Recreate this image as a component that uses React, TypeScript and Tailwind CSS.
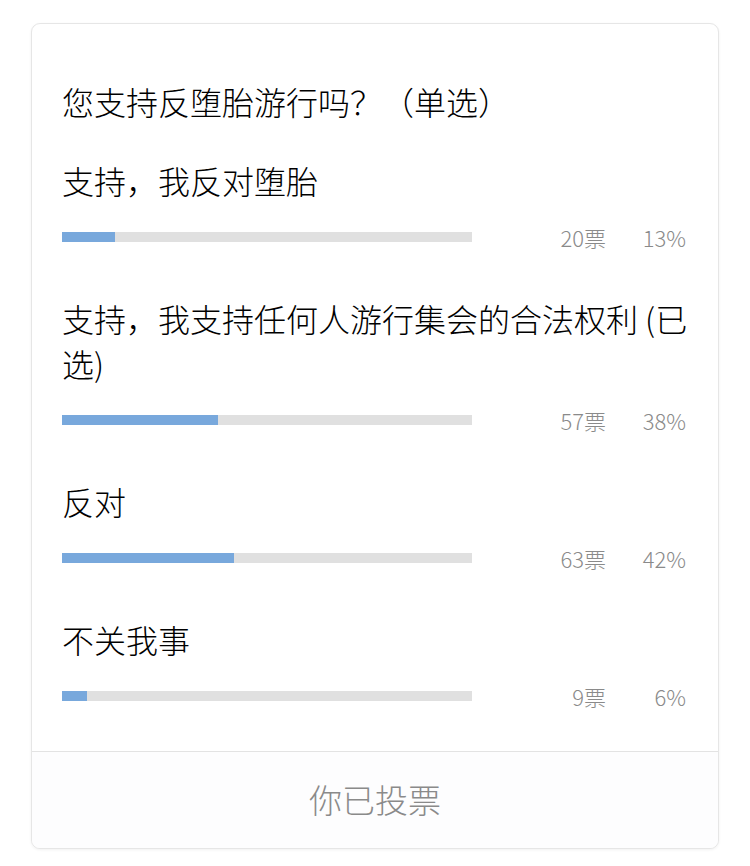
const font = { fontFamily: '"Noto Sans CJK SC", "Noto Sans", sans-serif' };

const options = [
  { label: '支持，我反对堕胎', votes: 20, pct: 13 },
  { label: '支持，我支持任何人游行集会的合法权利 (已选)', votes: 57, pct: 38 },
  { label: '反对', votes: 63, pct: 42 },
  { label: '不关我事', votes: 9, pct: 6 },
];

export default function App() {
  return (
    <div className="min-h-[866px] bg-white pt-[23px]" style={font}>
      <div className="mx-[31px] overflow-hidden rounded-[9px] border border-[#e6e6e6] bg-white shadow-[0_1px_3px_rgba(0,0,0,0.06)]">
        <div className="px-[30px] pt-[55px] pb-[40px]">
          <div className="text-[32px] font-light leading-[45px] text-black">您支持反堕胎游行吗？（单选）</div>
          <div className="mt-[34px] flex flex-col gap-[44px]">
            {options.map((o) => (
              <div key={o.label}>
                <div className="text-[32px] font-light leading-[45px] text-black">{o.label}</div>
                <div className="mt-[19px] flex h-[30px] items-center">
                  <div className="h-[10px] w-[410px] bg-[#e0e0e0]">
                    <div className="h-full bg-[#78a8dc]" style={{ width: `${o.pct}%` }} />
                  </div>
                  <div className="flex-1 text-right text-[22px] font-light leading-[30px] text-[#8a8a8a]">{o.votes}票</div>
                  <div className="w-[82px] pr-[2px] text-right text-[22px] font-light leading-[30px] text-[#8a8a8a]">{o.pct}%</div>
                </div>
              </div>
            ))}
          </div>
        </div>
        <div className="flex h-[97px] items-center justify-center border-t border-[#e3e3e3] bg-[#fdfdfe] text-[33px] font-light text-[#8a8a8a]">
          你已投票
        </div>
      </div>
    </div>
  );
}
